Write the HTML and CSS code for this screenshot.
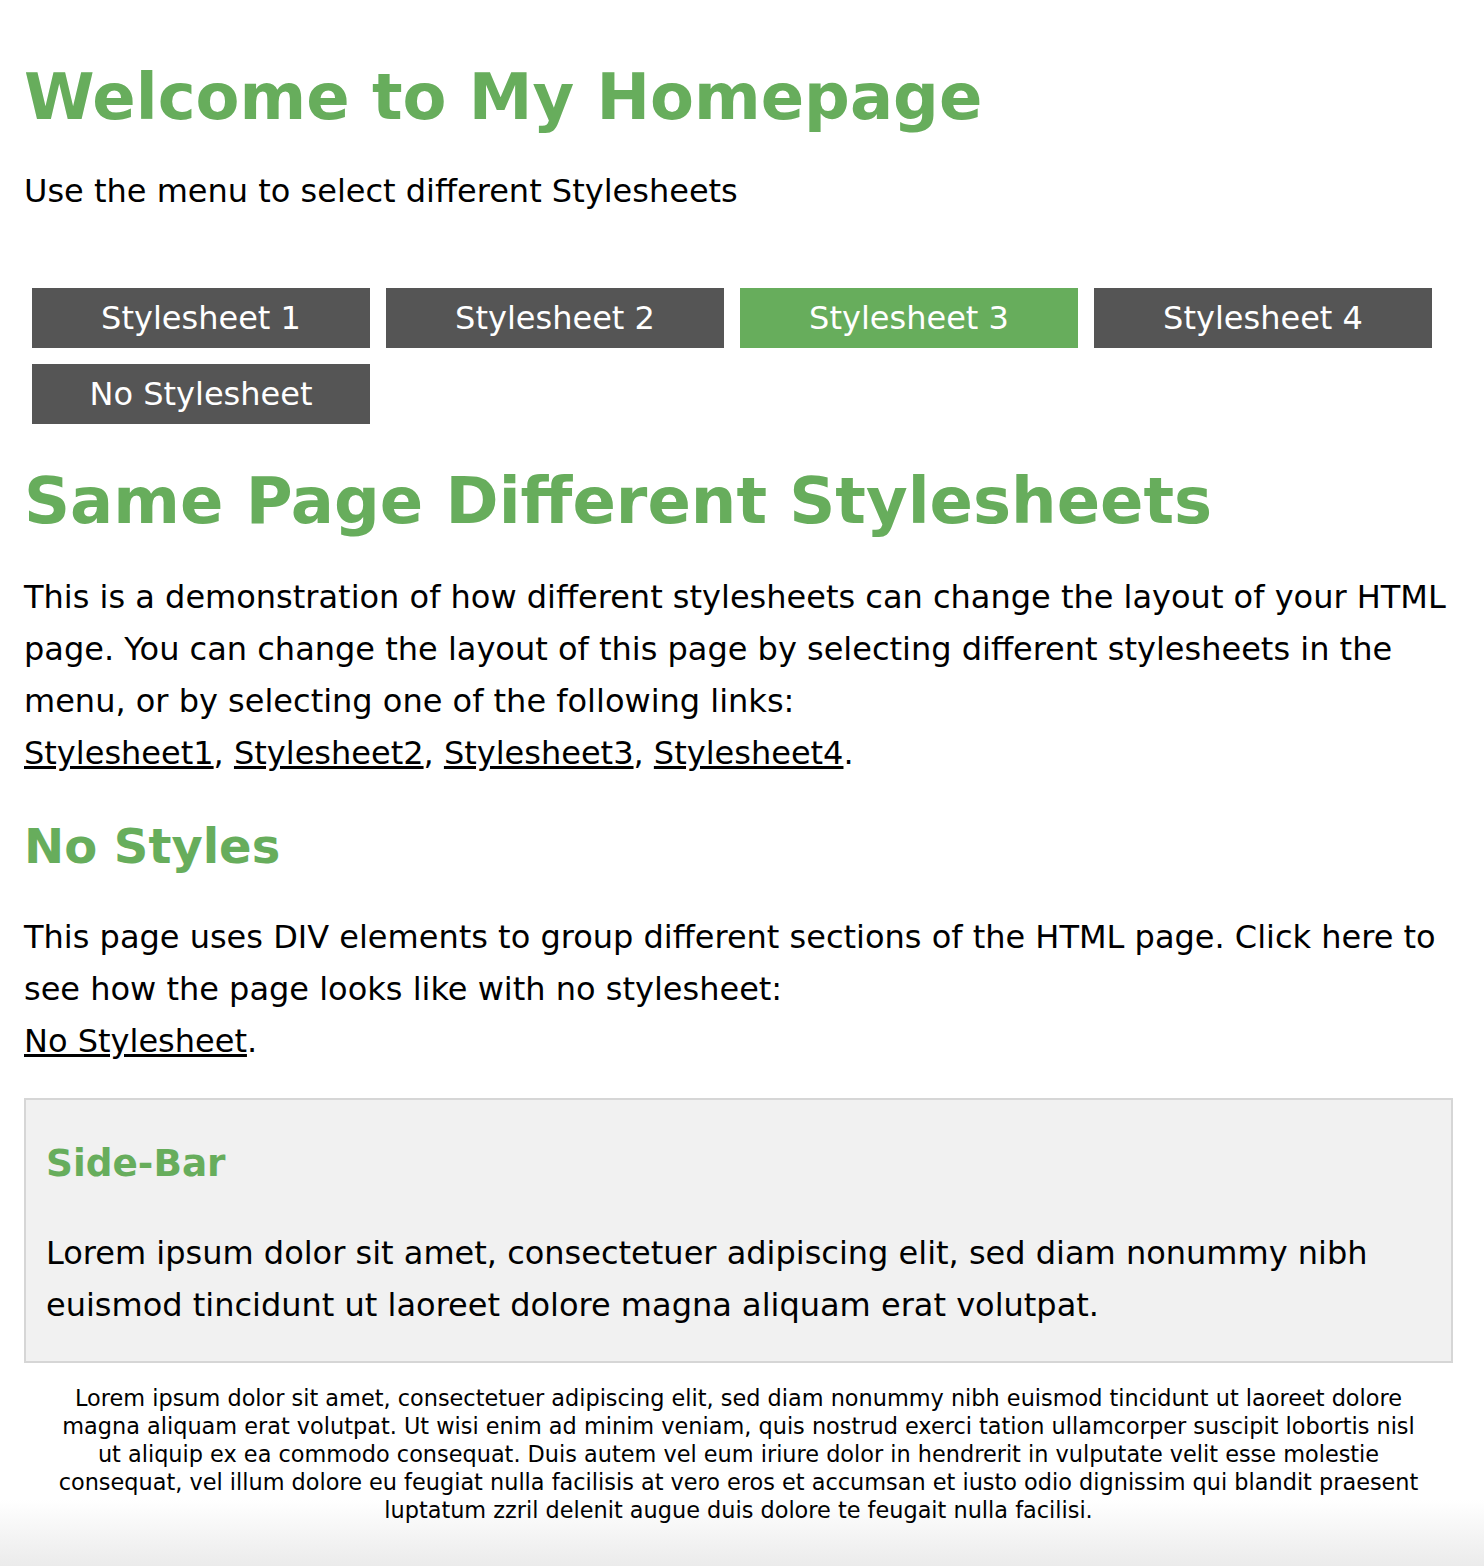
FILE: index.html
```html
<!DOCTYPE html>
<html lang="en">
<head>
<meta charset="utf-8">
<title>Welcome to My Homepage</title>
<link rel="stylesheet" href="styles.css">
</head>
<body>
  <div class="intro">
    <h1 class="title">Welcome to My Homepage</h1>
    <p class="lead">Use the menu to select different Stylesheets</p>
  </div>

  <nav class="menu">
    <a class="menu-item" href="#">Stylesheet 1</a>
    <a class="menu-item" href="#">Stylesheet 2</a>
    <a class="menu-item active" href="#">Stylesheet 3</a>
    <a class="menu-item" href="#">Stylesheet 4</a>
    <a class="menu-item" href="#">No Stylesheet</a>
  </nav>

  <div class="content">
    <h1 class="title second">Same Page Different Stylesheets</h1>
    <p class="text">This is a demonstration of how different stylesheets can change the layout of your HTML page. You can change the layout of this page by selecting different stylesheets in the menu, or by selecting one of the following links:<br>
    <a class="link" href="#">Stylesheet1</a>, <a class="link" href="#">Stylesheet2</a>, <a class="link" href="#">Stylesheet3</a>, <a class="link" href="#">Stylesheet4</a>.</p>

    <h2 class="subtitle">No Styles</h2>
    <p class="text">This page uses DIV elements to group different sections of the HTML page. Click here to see how the page looks like with no stylesheet:<br>
    <a class="link" href="#">No Stylesheet</a>.</p>
  </div>

  <div class="sidebar">
    <h3 class="side-title">Side-Bar</h3>
    <p class="side-text">Lorem ipsum dolor sit amet, consectetuer adipiscing elit, sed diam nonummy nibh euismod tincidunt ut laoreet dolore magna aliquam erat volutpat.</p>
  </div>

  <div class="footer">
    <p class="footer-text">Lorem ipsum dolor sit amet, consectetuer adipiscing elit, sed diam nonummy nibh euismod tincidunt ut laoreet dolore magna aliquam erat volutpat. Ut wisi enim ad minim veniam, quis nostrud exerci tation ullamcorper suscipit lobortis nisl ut aliquip ex ea commodo consequat. Duis autem vel eum iriure dolor in hendrerit in vulputate velit esse molestie consequat, vel illum dolore eu feugiat nulla facilisis at vero eros et accumsan et iusto odio dignissim qui blandit praesent luptatum zzril delenit augue duis dolore te feugait nulla facilisi.</p>
  </div>
</body>
</html>
```

FILE: styles.css
```css
html {
  background: linear-gradient(to bottom, #ffffff 0, #ffffff 1500px, #ebebeb 1566px);
  min-height: 1566px;
}

body {
  margin: 0;
  padding: 59px 31px 0 24px;
  font-family: "DejaVu Sans", Verdana, sans-serif;
  font-size: 32px;
  line-height: 52px;
  color: #000;
}

.title {
  margin: 0 0 29px 0;
  font-size: 64px;
  line-height: 77px;
  font-weight: bold;
  color: #67ad5c;
}

.title.second {
  margin: 31px 0 31px 0;
}

.lead {
  margin: 0 0 63px 0;
}

.menu {
  display: flex;
  flex-wrap: wrap;
  gap: 16px;
  padding: 8px;
}

.menu-item {
  display: block;
  width: 338px;
  height: 60px;
  line-height: 60px;
  text-align: center;
  background: #555555;
  color: #fff;
  text-decoration: none;
  font-size: 32px;
}

.menu-item.active {
  background: #67ad5c;
}

.text {
  margin: 0;
}

.link {
  color: #000;
  text-decoration: underline;
}

.subtitle {
  margin: 38px 0 36px 0;
  font-size: 48px;
  line-height: 58px;
  font-weight: bold;
  color: #67ad5c;
}

.sidebar {
  margin-top: 31px;
  border: 2px solid #d6d6d6;
  background: #f1f1f1;
  padding: 41px 20px 30px 20px;
}

.side-title {
  margin: 0 0 42px 0;
  font-size: 37.4px;
  line-height: 44px;
  font-weight: bold;
  color: #67ad5c;
}

.side-text {
  margin: 0;
}

.footer {
  padding: 21px 24px 0 24px;
}

.footer-text {
  margin: 0;
  font-size: 22.4px;
  line-height: 28px;
  text-align: center;
}
```
